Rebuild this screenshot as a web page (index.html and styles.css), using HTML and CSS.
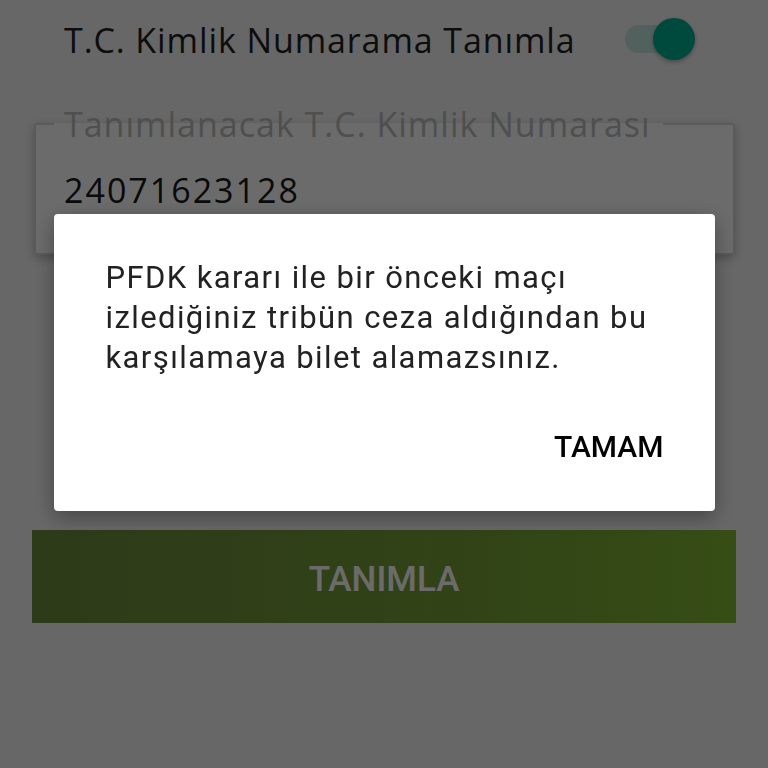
FILE: index.html
```html
<!DOCTYPE html>
<html lang="tr">
<head>
    <meta charset="UTF-8">
    <meta name="viewport" content="width=device-width, initial-scale=1.0">
    <title>T.C. Kimlik Numarası</title>
    <link rel="stylesheet" href="styles.css">
</head>
<body>
    <div class="page">
        <div class="switch-row">
            <span class="switch-label">T.C. Kimlik Numarama Tanımla</span>
            <span class="switch">
                <span class="switch-track"><span class="switch-thumb"></span></span>
            </span>
        </div>

        <fieldset class="field">
            <legend>Tanımlanacak T.C. Kimlik Numarası</legend>
            <div class="field-value">24071623128</div>
        </fieldset>

        <button class="submit" type="button">TANIMLA</button>
    </div>

    <div class="scrim">
        <div class="dialog">
            <p class="dialog-text">PFDK kararı ile bir önceki maçı izlediğiniz tribün ceza aldığından bu karşılamaya bilet alamazsınız.</p>
            <div class="dialog-actions">
                <button class="dialog-button" type="button">TAMAM</button>
            </div>
        </div>
    </div>
</body>
</html>
```

FILE: styles.css
```css
body {
    margin: 0;
    background-color: #f5f5f5;
    font-family: "Open Sans", "Noto Sans", sans-serif;
    height: 768px;
    overflow: hidden;
}
.page {
    padding-top: 20px;
}
.switch-row {
    display: flex;
    align-items: center;
    justify-content: space-between;
    padding: 0 78px 0 64px;
    height: 40px;
}
.switch-label {
    font-size: 34px;
    line-height: 40px;
    letter-spacing: 0.9px;
    color: #1f1f1f;
}
.switch-track {
    display: flex;
    align-items: center;
    justify-content: flex-end;
    width: 65px;
    height: 28px;
    border-radius: 14px;
    background-color: #c4e6e0;
    margin-top: -2px;
}
.switch-thumb {
    flex-shrink: 0;
    width: 42px;
    height: 42px;
    margin-right: -5px;
    border-radius: 50%;
    background-color: #00ae92;
    box-shadow: 0 2px 4px rgba(0,0,0,0.3);
}
.field {
    margin: 45px 33px 0 34px;
    padding: 0 18px 43px 18px;
    border: 2px solid #d6d6d6;
    border-radius: 3px;
    background-color: #fff;
    box-shadow: 0 3px 8px rgba(0,0,0,0.25);
}
.field legend {
    padding: 0 12px 0 10px;
    font-size: 34px;
    line-height: 38px;
    letter-spacing: 1px;
    color: #bcbcbc;
}
.field-value {
    padding: 27px 0 0 10px;
    font-size: 34px;
    line-height: 40px;
    letter-spacing: 2px;
    color: #181818;
}
.submit {
    display: block;
    width: 704px;
    height: 93px;
    margin: 275px 32px 0 32px;
    padding-top: 6px;
    border: none;
    background: linear-gradient(90deg, #6e8c3e, #76a036 60%, #82b834);
    color: #fff;
    font-family: Roboto, sans-serif;
    font-size: 35px;
    font-weight: 500;
}
.scrim {
    position: fixed;
    inset: 0;
    background-color: rgba(0,0,0,0.58);
    display: flex;
    justify-content: center;
    align-items: flex-start;
    padding-top: 214px;
}
.dialog {
    width: 661px;
    height: 297px;
    box-sizing: border-box;
    padding: 44px 51px 0 52px;
    background-color: #fff;
    border-radius: 4px;
    box-shadow: 0 6px 20px rgba(0,0,0,0.35);
    font-family: Roboto, sans-serif;
}
.dialog-text {
    margin: 0;
    font-size: 31px;
    line-height: 40px;
    letter-spacing: 1.4px;
    color: #222;
}
.dialog-actions {
    display: flex;
    justify-content: flex-end;
    margin-top: 51px;
}
.dialog-button {
    padding: 0;
    border: none;
    background: none;
    font-family: Roboto, sans-serif;
    font-size: 30px;
    line-height: 36px;
    font-weight: 500;
    color: #000;
}
```
